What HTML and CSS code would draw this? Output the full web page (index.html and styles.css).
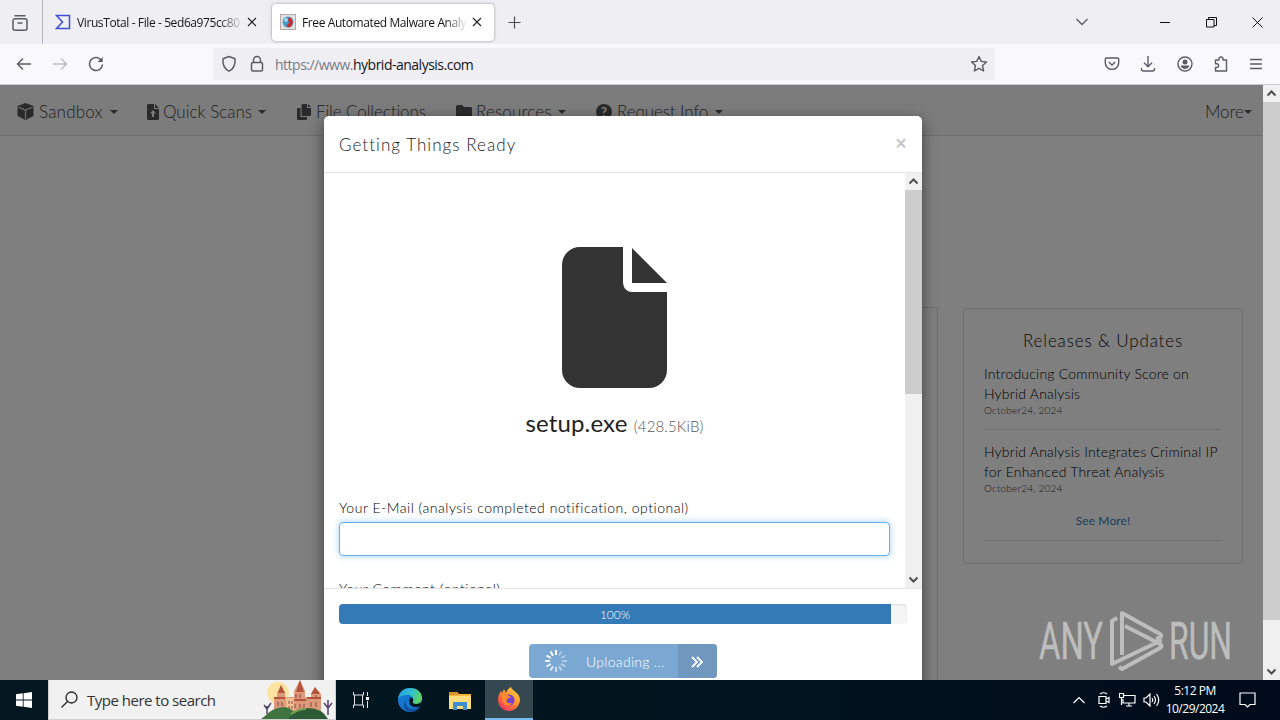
FILE: index.html
```html
<!DOCTYPE html>
<html lang="en">
<head>
  <meta charset="UTF-8">
  <title>Free Automated Malware Analysis Service</title>
  <link rel="stylesheet" href="styles.css">
</head>
<body>

<!-- tab strip -->
<div class="tabs">
  <div class="tabs-view">
    <svg width="18" height="18" viewBox="0 0 18 18" fill="none" stroke="#5b5b66" stroke-width="1.5"><path d="M3.5 1.7h11M4 4.7h10a2 2 0 0 1 2 2v7.5a2 2 0 0 1-2 2H4a2 2 0 0 1-2-2V6.700a2 2 0 0 1 2-2zM6.500 9h5"/></svg>
  </div>
  <div class="tab">
    <svg class="tab-icon" width="16" height="16" viewBox="0 0 16 16" fill="none" stroke="#3b4fd8" stroke-width="1.5"><path d="M1.500 1.500h13v13h-13L7.500 8z"/></svg>
    <span class="tab-title">VirusTotal - File - 5ed6a975cc80</span>
    <svg class="tab-close" width="10" height="10" viewBox="0 0 10 10" stroke="#222" stroke-width="1.100"><path d="M1 1l8 8M9 1L1 9"/></svg>
  </div>
  <div class="tab active">
    <svg class="tab-icon" width="16" height="16" viewBox="0 0 16 16"><rect x=".5" y=".5" width="15" height="15" fill="#dfe3e4" stroke="#b9a9a5"/><circle cx="8" cy="8" r="5.500" fill="#3f9fcc"/><path d="M9 3a5.500 5.500 0 0 1 0 10.400L6 12l3-3-1-3z" fill="#d02c2c"/><circle cx="6" cy="6" r="2" fill="#9ed4ea"/></svg>
    <span class="tab-title">Free Automated Malware Analy</span>
    <svg class="tab-close" width="10" height="10" viewBox="0 0 10 10" stroke="#222" stroke-width="1.100"><path d="M1 1l8 8M9 1L1 9"/></svg>
  </div>
  <svg class="new-tab" width="13" height="13" viewBox="0 0 13 13" stroke="#4c4c55" stroke-width="1.200"><path d="M6.500 0.500v12M.5 6.500h12"/></svg>
  <div class="window-buttons">
    <svg width="12" height="12" viewBox="0 0 12 12" fill="none" stroke="#5b5b66" stroke-width="1.300"><path d="M.5 3L6 8.500 11.500 3"/></svg>
    <svg class="min" width="11" height="11" viewBox="0 0 11 11" stroke="#111"><path d="M0 5.500h10"/></svg>
    <svg width="11" height="11" viewBox="0 0 11 11" fill="none" stroke="#111"><path d="M.5 2.500h7.500v7.500H.5zM2.500 2.500v-2h8v8H8"/></svg>
    <svg width="11" height="11" viewBox="0 0 11 11" stroke="#111"><path d="M.5.5l10 10M10.500.5l-10 10"/></svg>
  </div>
</div>

<!-- toolbar -->
<div class="toolbar">
  <div class="nav-buttons">
    <svg width="16" height="16" viewBox="0 0 16 16" fill="none" stroke="#5b5b66" stroke-width="1.400"><path d="M15 8H1.500M7 2.500L1.500 8 7 13.500"/></svg>
    <svg width="16" height="16" viewBox="0 0 16 16" fill="none" stroke="#bdbdc4" stroke-width="1.400"><path d="M1 8h13.500M9 2.500L14.500 8 9 13.500"/></svg>
    <svg width="16" height="16" viewBox="0 0 16 16" fill="none" stroke="#5b5b66" stroke-width="1.500"><path d="M13.500 4.500A6.500 6.500 0 1 0 14.500 8.500"/><path d="M14.700 1v5H9.500z" fill="#5b5b66" stroke="none"/></svg>
  </div>
  <div class="urlbar">
    <svg width="16" height="18" viewBox="0 0 16 18" fill="none" stroke="#5b5b66" stroke-width="1.500"><path d="M8 1.500l6 2.200c.5 5.500-.8 9.800-6 12.500C2.800 13.500 1.500 9.200 2 3.700z" stroke-linejoin="round"/></svg>
    <svg width="14" height="18" viewBox="0 0 14 18" fill="none" stroke="#5b5b66" stroke-width="1.500"><rect x="1.500" y="7.500" width="11" height="8.500" rx="1.500"/><path d="M3.500 7.500V5a3.500 3.500 0 0 1 7 0v2.500"/></svg>
    <span class="url">https://www.<b>hybrid-analysis.com</b></span>
    <svg class="star" width="18" height="18" viewBox="0 0 18 18" fill="none" stroke="#5b5b66" stroke-width="1.400" stroke-linejoin="round"><path d="M9 1.500l2.200 4.900 5.300.6-4 3.500 1.100 5.500L9 13.300 4.400 16l1.100-5.500-4-3.500 5.300-.6z"/></svg>
  </div>
  <div class="tools">
    <svg width="16" height="16" viewBox="0 0 16 16" fill="none" stroke="#5b5b66" stroke-width="1.400"><path d="M2.500 2h11A1.200 1.200 0 0 1 14.700 3.200v3.500a6.700 6.700 0 0 1-13.400 0V3.200A1.200 1.200 0 0 1 2.500 2zM4.800 6L8 9l3.200-3"/></svg>
    <svg width="16" height="16" viewBox="0 0 16 16" fill="none" stroke="#5b5b66" stroke-width="1.400"><path d="M8 0v10.500M4 6.800l4 4 4-4M1.500 12v1a2 2 0 0 0 2 2h9a2 2 0 0 0 2-2v-1"/></svg>
    <svg width="16" height="16" viewBox="0 0 16 16"><circle cx="8" cy="8" r="7" fill="none" stroke="#5b5b66" stroke-width="1.400"/><circle cx="8" cy="6" r="2.500" fill="#5b5b66"/><path d="M3.500 9.500h9c-.6 2.300-2.500 3.500-4.500 3.500s-3.900-1.200-4.500-3.500z" fill="#5b5b66"/></svg>
    <svg width="16" height="16" viewBox="0 0 16 16" fill="none" stroke="#5b5b66" stroke-width="1.400" stroke-linejoin="round"><path d="M6 4V3a2 2 0 0 1 4 0v1h3.500v11H2.500v-3.500h1.200a1.900 1.900 0 0 0 0-3.800H2.500V4z"/></svg>
    <svg width="14" height="16" viewBox="0 0 14 16" stroke="#5b5b66" stroke-width="1.300"><path d="M1 3.500h12M1 8h12M1 12.500h12"/></svg>
  </div>
</div>

<!-- page content -->
<div class="viewport">
  <div class="page">
    <nav class="navbar">
      <a class="nav-sandbox">
        <svg width="17" height="17" viewBox="0 0 17 17" fill="#555"><path d="M8.500 0l8 3v10l-8 4-8-4V3z"/><path d="M1.500 4.200l7 2.800 7-2.800M8.500 7v9" stroke="#ddd" fill="none" stroke-width="1.200"/></svg>
        <span>Sandbox</span><i class="caret"></i>
      </a>
      <a class="nav-scans">
        <svg width="12" height="16" viewBox="0 0 12 16"><path d="M1.500 0H7v5h5v9.500A1.500 1.500 0 0 1 10.500 16h-9A1.500 1.500 0 0 1 0 14.500v-13A1.500 1.500 0 0 1 1.500 0zM8 0l4 4H8z" fill="#555"/><path d="M6 6l3 3.500H7V13H5V9.500H3z" fill="#f8f8f8"/></svg>
        <span>Quick Scans</span><i class="caret"></i>
      </a>
      <a class="nav-files">
        <svg width="14" height="16" viewBox="0 0 14 16" fill="#555"><path d="M5.500 0H10v4h4v7a1 1 0 0 1-1 1H5.500a1 1 0 0 1-1-1V1a1 1 0 0 1 1-1zM11 0l3 3h-3zM1 4h2.500v9H10v2a1 1 0 0 1-1 1H1a1 1 0 0 1-1-1V5a1 1 0 0 1 1-1z"/></svg>
        <span>File Collections</span>
      </a>
      <a class="nav-resources">
        <svg width="16" height="13" viewBox="0 0 16 13" fill="#555"><path d="M1.500 0H6l2 2h6.500A1.500 1.500 0 0 1 16 3.500v8a1.500 1.500 0 0 1-1.500 1.500h-13A1.500 1.500 0 0 1 0 11.500v-10A1.500 1.500 0 0 1 1.500 0z"/></svg>
        <span>Resources</span><i class="caret"></i>
      </a>
      <a class="nav-request">
        <em class="question">?</em>
        <span>Request Info</span><i class="caret"></i>
      </a>
      <a class="nav-more"><span>More</span><i class="caret"></i></a>
    </nav>
    <div class="columns">
      <div class="main-panel"></div>
      <aside class="updates">
        <h4>Releases &amp; Updates</h4>
        <article>
          <h5>Introducing Community Score on<br>Hybrid Analysis</h5>
          <time>October24, 2024</time>
        </article>
        <article>
          <h5>Hybrid Analysis Integrates Criminal IP<br>for Enhanced Threat Analysis</h5>
          <time>October24, 2024</time>
          <a class="see-more">See More!</a>
        </article>
      </aside>
    </div>
    <div class="backdrop"></div>

    <div class="modal">
      <div class="modal-header">
        <h4>Getting Things Ready</h4>
        <span class="close">×</span>
      </div>
      <div class="modal-body">
        <div class="modal-content">
          <svg class="file-icon" width="106" height="142" viewBox="0 0 106 142" fill="#333"><path d="M18 0h43v36q1 8 8 9h36v78a18 18 0 0 1-18 18H18A18 18 0 0 1 0 123V18A18 18 0 0 1 18 0zM70 1l35 35H70z"/></svg>
          <p class="file-name"><span>setup.exe</span> <small>(428.5KiB)</small></p>
          <label class="email-label">Your E-Mail (analysis completed notification, optional)</label>
          <input class="email" type="text">
          <label class="comment-label">Your Comment (optional)</label>
        </div>
        <div class="scrollbar">
          <svg width="17" height="17" viewBox="0 0 17 17" fill="none" stroke="#505050" stroke-width="2"><path d="M4.500 10.500l4-4 4 4"/></svg>
          <div class="thumb"></div>
          <svg width="17" height="17" viewBox="0 0 17 17" fill="none" stroke="#505050" stroke-width="2"><path d="M4.500 6.500l4 4 4-4"/></svg>
        </div>
      </div>
      <div class="modal-footer">
        <div class="progress"><div class="bar">100%</div></div>
        <div class="upload">
          <svg width="24" height="24" viewBox="-12 -12 24 24" stroke="#fff" stroke-width="2">
            <path d="M0-6v-5"/>
            <path d="M0-6v-5" transform="rotate(30)" opacity=".35"/>
            <path d="M0-6v-5" transform="rotate(60)" opacity=".4"/>
            <path d="M0-6v-5" transform="rotate(90)" opacity=".4"/>
            <path d="M0-6v-5" transform="rotate(120)" opacity=".5"/>
            <path d="M0-6v-5" transform="rotate(150)" opacity=".5"/>
            <path d="M0-6v-5" transform="rotate(180)" opacity=".6"/>
            <path d="M0-6v-5" transform="rotate(210)" opacity=".75"/>
            <path d="M0-6v-5" transform="rotate(240)" opacity=".85"/>
            <path d="M0-6v-5" transform="rotate(270)" opacity=".9"/>
            <path d="M0-6v-5" transform="rotate(300)"/>
            <path d="M0-6v-5" transform="rotate(330)"/>
          </svg>
          <span class="upload-text">Uploading ...</span>
          <span class="upload-next"><svg width="12" height="12" viewBox="0 0 12 12" fill="none" stroke="#fff" stroke-width="1.800"><path d="M1 1l5 5-5 5M6 1l5 5-5 5"/></svg></span>
        </div>
      </div>
    </div>

    <svg class="watermark" width="200" height="64" viewBox="0 0 200 64">
      <g class="watermark-text" font-size="52">
        <text x="1" y="50" textLength="64" lengthAdjust="spacingAndGlyphs">ANY</text>
        <text x="131" y="50" textLength="63" lengthAdjust="spacingAndGlyphs">RUN</text>
      </g>
      <g fill="none" stroke="#bdbdbd" stroke-width="4" stroke-linejoin="round">
        <path d="M84 46V4l38 21q3 2-1 4l-3 1"/>
        <path d="M79 9l-5 3v43l48-23-3-2"/>
        <path d="M87 17l35 18q3 2 0 4L84 60l-3-2"/>
      </g>
    </svg>
  </div>
  <div class="scrollbar">
    <svg width="17" height="17" viewBox="0 0 17 17" fill="none" stroke="#505050" stroke-width="2"><path d="M4.500 10.500l4-4 4 4"/></svg>
    <div class="thumb"></div>
    <svg width="17" height="17" viewBox="0 0 17 17" fill="none" stroke="#505050" stroke-width="2"><path d="M4.500 6.500l4 4 4-4"/></svg>
  </div>
</div>

<!-- windows taskbar -->
<div class="taskbar">
  <div class="start">
    <svg width="16" height="16" viewBox="0 0 16 16" fill="#fff"><path d="M0 2.200l6.800-.9v6.300H0zM7.600 1.200L16 0v7.600H7.600zM0 8.400h6.800v6.300L0 13.800zM7.600 8.400H16V16l-8.400-1.200z"/></svg>
  </div>
  <div class="search">
    <svg width="17" height="17" viewBox="0 0 17 17" fill="none" stroke="#222" stroke-width="1.300"><circle cx="10.500" cy="6.500" r="5.500"/><path d="M6.500 10.500L.5 16.500"/></svg>
    <span>Type here to search</span>
    <svg class="castle" width="74" height="39" viewBox="0 0 74 39">
      <circle cx="17" cy="13" r="11" fill="#fbe3a0"/>
      <path d="M13 31V17h3V13l4-8 4 8v4h9V11l6-11 5 11v6h6v-3l4-7 6 7v15l-1 5z" fill="#dc9a78"/>
      <path d="M17 13l3-8 4 8zM35 12l4-12 4 12zM50 14l4-7 5 7zM13 19h11v-2H13zM31 21h14v-2H31zM46 19h14v-2H46z" fill="#b4533f"/>
      <path d="M17 22v4M21 22v4M28 20v4M35 14v4M39 14v4M34 24v4M39 24v4M43 24v4M50 22v5M55 22v5M55 15v3" stroke="#8a4a48"/>
      <path d="M25 18h8v12h-8z" fill="#efc08f"/>
      <path d="M28 21v3M31 21v3M28 26v3M31 26v3" stroke="#8a4a48"/>
      <path d="M4 36q7-8 18-9 8 0 15 9l5 3H0z" fill="#3f7440"/>
      <path d="M27 39q8-10 20-11 14 0 20 11z" fill="#2c5b36"/>
      <path d="M30 34q7-5 15-5" stroke="#77a44f" stroke-width="2" fill="none"/>
      <path d="M6 34v-8M3 25l3 4 4-6M67 35v-11M63 23l4 5 4-5M67 24v-4" stroke="#514269" stroke-width="1.500" fill="none"/>
    </svg>
  </div>
  <div class="apps">
    <div class="app">
      <svg width="18" height="18" viewBox="0 0 18 18" fill="none" stroke="#e4e8ea"><path d="M1.500 1v3h10V1M1.500 17v-3h10v3M2.500 4v10M10.500 4v10M15.500 1v4M15.500 10v7"/><path d="M14 6h3v3h-3z" fill="#fff" stroke="none"/></svg>
    </div>
    <div class="app">
      <svg width="24" height="24" viewBox="0 0 24 24">
        <defs>
          <linearGradient id="edgeTop" x1="0" y1="0" x2="1" y2=".3"><stop offset="0" stop-color="#2299dc"/><stop offset=".6" stop-color="#31c1ce"/><stop offset="1" stop-color="#5cd36a"/></linearGradient>
        </defs>
        <circle cx="12" cy="12" r="12" fill="#1477cf"/>
        <path d="M0 11C1 3 7 0 12 0c8 0 12 5 12 10 0 4-3 6-6 6-3 0-4-1-3-3 1-4-2-6-5-6C5 7 1 9 0 11z" fill="url(#edgeTop)"/>
        <path d="M8 11c-2 6 2 10 7 10 3 0 5-1 7-2-3 4-7 5-10 5-6 0-8-7-4-13z" fill="#10529b"/>
        <path d="M12 10c2-1 4 1 3 3s0 3 3 3c3 0 5-1 6-3 0 3-1 5-3 6-5 1-12-1-9-9z" fill="#02141c"/>
      </svg>
    </div>
    <div class="app">
      <svg width="22" height="19" viewBox="0 0 22 19"><path d="M0 1h8l2 2h12v15H0z" fill="#f5b73b"/><path d="M0 1h8l2 2-2 1H0z" fill="#d9932b"/><path d="M0 5h22v13H0z" fill="#fddc7c"/><path d="M4 19v-8h14v8h-4v-4H8v4z" fill="#3e8fd0"/></svg>
    </div>
    <div class="app current">
      <svg width="24" height="24" viewBox="0 0 24 24">
        <defs><linearGradient id="fox" x1="1" y1="0" x2=".2" y2="1"><stop offset="0" stop-color="#ffe14a"/><stop offset=".45" stop-color="#ff9a2c"/><stop offset="1" stop-color="#ee2c63"/></linearGradient></defs>
        <path d="M4 4l1 2 2-4 2 4c1-3 3-5 5-6 1 4 8 5 9 12 0 7-5 12-11 12S1 19 1 13c0-4 1-6 3-9z" fill="url(#fox)"/>
        <circle cx="12" cy="13" r="5.500" fill="#7542d6"/>
        <path d="M5 8q4-2 7 1l2 1-4 2q-2 5 5 4-4 5-8 1-3-4-2-9z" fill="#ff8a2b"/>
      </svg>
    </div>
  </div>
  <div class="tray">
    <svg width="12" height="8" viewBox="0 0 12 8" fill="none" stroke="#fff" stroke-width="1.200"><path d="M.5 7L6 1.500 11.500 7"/></svg>
    <svg class="meet" width="12" height="16" viewBox="0 0 12 16" fill="none" stroke="#fff" stroke-width="1.200"><path d="M1 4.500h7v7H1zM8 7l3-1.500v5L8 9M2 2q3.500-2.500 7 0M2 14q3.500 2.500 7 0"/></svg>
    <svg class="net" width="17" height="14" viewBox="0 0 17 14" fill="none" stroke="#fff" stroke-width="1.200"><path d="M5 2.500h11v7.500H4V6M7 13h6M10 10v3M.5.5h4v4h-4zM2.500 4.500V12"/></svg>
    <svg class="sound" width="18" height="14" viewBox="0 0 18 14" fill="none" stroke="#fff" stroke-width="1.200"><path d="M1 5h2l4-4v12L3 9H1zM9 5q1.500 2 0 4M11 3q3 4 0 8M13.500 1q4.500 6 0 12"/></svg>
    <div class="clock"><span>5:12 PM</span><span>10/29/2024</span></div>
    <svg width="17" height="16" viewBox="0 0 17 16" fill="none" stroke="#fff" stroke-width="1.200"><path d="M1 1h15v11.500h-5L8.500 15 6 12.500H1z"/></svg>
  </div>
</div>

</body>
</html>
```
FILE: styles.css
```css
* {
  box-sizing: border-box;
}
body {
  margin: 0;
  width: 1280px;
  height: 720px;
  overflow: hidden;
  display: flex;
  flex-direction: column;
  font-family: "Open Sans", sans-serif;
}
svg {
  display: block;
  flex: none;
}
h4, h5, p {
  margin: 0;
  font-weight: 300;
}

/* tabs */
.tabs {
  height: 44px;
  flex: none;
  display: flex;
  align-items: center;
  background: #efeef3;
}
.tabs-view {
  width: 43px;
  height: 44px;
  padding: 14px 0 0 11px;
  border-right: 1px solid #b5b5bc;
}
.tab {
  width: 222px;
  height: 37px;
  margin-left: 3px;
  padding-left: 9px;
  display: flex;
  align-items: center;
  border-radius: 4px;
}
.tab.active {
  margin-left: 4px;
  padding-left: 8px;
  background: #fff;
  box-shadow: 0 0 3px rgba(0, 0, 0, 0.4);
}
.tab-title {
  width: 166px;
  margin: 0 4px 0 6px;
  white-space: nowrap;
  font-size: 12px;
  letter-spacing: -0.4px;
  color: #15141a;
  -webkit-mask-image: linear-gradient(to right, #000 86%, transparent);
  mask-image: linear-gradient(to right, #000 86%, transparent);
}
.new-tab {
  margin-left: 14px;
}
.window-buttons {
  margin-left: auto;
  padding-right: 17px;
  display: flex;
  align-items: center;
  gap: 35px;
}
.window-buttons .min {
  margin-left: 37px;
}

/* toolbar */
.toolbar {
  height: 41px;
  flex: none;
  display: flex;
  align-items: center;
  background: #f9f9fb;
  border-bottom: 1px solid #ccc;
}
.nav-buttons {
  width: 213px;
  padding-left: 16px;
  display: flex;
  gap: 20px;
}
.urlbar {
  width: 782px;
  height: 32px;
  padding: 0 7px 0 8px;
  display: flex;
  align-items: center;
  background: #efeef3;
  border-radius: 2px;
}
.urlbar svg + svg {
  margin-left: 13px;
}
.url {
  margin-left: 11px;
  padding-top: 1px;
  font-size: 14px;
  letter-spacing: -0.5px;
  color: #7a7a82;
}
.url b {
  font-weight: 400;
  color: #15141a;
}
.urlbar .star {
  margin-left: auto;
}
.tools {
  flex: 1;
  padding: 0 17px 0 109px;
  display: flex;
  justify-content: space-between;
}

/* page */
.viewport {
  height: 595px;
  flex: none;
  display: flex;
}
.page {
  position: relative;
  width: 1263px;
  overflow: hidden;
  background: #fff;
  font-family: Lato, sans-serif;
  font-weight: 300;
}
.navbar {
  height: 51px;
  display: flex;
  align-items: center;
  padding: 3px 11px 0 17px;
  background: #f8f8f8;
  border-bottom: 1px solid #ddd;
  font-size: 17px;
  color: #444;
}
.navbar a {
  display: flex;
  align-items: center;
  white-space: nowrap;
}
.nav-sandbox { width: 130px; gap: 5px; letter-spacing: 0.2px; }
.nav-scans { width: 150px; gap: 4px; }
.nav-files { width: 159px; gap: 5px; letter-spacing: -0.1px; }
.nav-resources { width: 140px; gap: 4px; letter-spacing: 0.15px; }
.nav-request { gap: 5px; letter-spacing: -0.1px; }
.nav-more { margin-left: auto; }
.caret {
  margin-left: 2px;
  border: 4px solid transparent;
  border-top-color: #555;
  border-bottom: 0;
}
.nav-more .caret {
  margin-left: 0;
}
.question {
  width: 16px;
  height: 16px;
  border-radius: 50%;
  background: #555;
  color: #f8f8f8;
  font: 900 13px/16px Lato, sans-serif;
  text-align: center;
}
.columns {
  display: flex;
  padding: 171px 20px 0 340px;
}
.main-panel {
  width: 598px;
  height: 420px;
  border: 1px solid #ddd;
}
.updates {
  width: 280px;
  height: 256px;
  margin: 1px 0 0 25px;
  padding: 20px;
  border: 1px solid #ddd;
  border-radius: 3px;
}
.updates h4 {
  text-align: center;
  font-size: 17px;
  line-height: 23px;
  letter-spacing: 0.85px;
  color: #111;
}
.updates article {
  padding-top: 12px;
  height: 78px;
  border-bottom: 1px solid #e3e3e3;
}
.updates article + article {
  height: 111px;
}
.updates h5 {
  font-size: 14px;
  line-height: 19.500px;
  letter-spacing: 0.22px;
  white-space: nowrap;
  color: #000;
}
.updates time {
  display: block;
  font-size: 10px;
  line-height: 14px;
  letter-spacing: 0.2px;
  color: #333;
}
.see-more {
  display: block;
  margin-top: 18px;
  text-align: center;
  font-size: 12px;
  font-weight: 400;
  line-height: 16px;
  letter-spacing: 0.1px;
  color: #337ab7;
}
.backdrop {
  position: absolute;
  inset: 0;
  background: rgba(0, 0, 0, 0.5);
}

/* modal */
.modal {
  position: absolute;
  left: 324px;
  top: 31px;
  width: 598px;
  height: 600px;
  background: #fff;
  border-radius: 5px;
  box-shadow: 0 5px 15px rgba(0, 0, 0, 0.5);
  color: #222;
}
.modal-header {
  height: 57px;
  padding: 1px 15px 0;
  display: flex;
  align-items: center;
  justify-content: space-between;
  border-bottom: 1px solid #e5e5e5;
}
.modal-header h4 {
  font-size: 17px;
  letter-spacing: 1.05px;
}
.close {
  margin-top: -4px;
  font: 600 21px/20px "Open Sans", sans-serif;
  color: #c4c4c4;
}
.modal-body {
  height: 416px;
  display: flex;
  overflow: hidden;
  border-bottom: 1px solid #e5e5e5;
}
.modal-content {
  width: 581px;
  padding: 74px 15px 0;
  display: flex;
  flex-direction: column;
}
.file-icon {
  margin-left: 223px;
}
.file-name {
  margin: 18px 0 0;
  text-align: center;
  font-size: 24px;
  line-height: 32px;
  font-weight: 400;
  letter-spacing: 0.15px;
  white-space: nowrap;
}
.file-name small {
  font-size: 15px;
  font-weight: 300;
  color: #555;
}
.email-label,
.comment-label {
  font-size: 14px;
  line-height: 20px;
  letter-spacing: 0.52px;
  color: #000;
}
.email-label {
  margin-top: 56px;
}
.email {
  width: 551px;
  height: 34px;
  margin-top: 4px;
  flex: none;
  background: #fff;
  border: 1px solid #66afe9;
  border-radius: 4px;
  box-shadow: 0 0 7px rgba(102, 175, 233, 0.6);
}
.comment-label {
  margin-top: 23px;
}
.scrollbar {
  width: 17px;
  flex: none;
  display: flex;
  flex-direction: column;
  background: #f0f0f0;
}
.scrollbar .thumb {
  height: 518px;
  margin-bottom: auto;
  background: #cdcdcd;
}
.modal .thumb {
  height: 204px;
}
.modal-footer {
  padding: 15px;
  display: flex;
  flex-direction: column;
  align-items: center;
}
.progress {
  width: 568px;
  height: 20px;
  background: #f5f5f5;
  border-radius: 4px;
  box-shadow: inset 0 1px 2px rgba(0, 0, 0, 0.1);
}
.bar {
  width: 552px;
  height: 20px;
  background: #337ab7;
  border-radius: 4px 0 0 4px;
  color: #fff;
  font-size: 12px;
  line-height: 21px;
  text-align: center;
}
.upload {
  width: 188px;
  height: 34px;
  margin-top: 20px;
  padding-left: 15px;
  display: flex;
  align-items: center;
  overflow: hidden;
  background: #7ba8d2;
  border-radius: 4px;
  color: #fff;
}
.upload-text {
  width: 110px;
  padding: 1px 0 0 18px;
  font-size: 14px;
  letter-spacing: 0.3px;
  white-space: nowrap;
}
.upload-next {
  width: 39px;
  height: 34px;
  padding: 12px 0 0 13px;
  background: #7097be;
}
.watermark {
  position: absolute;
  left: 1038px;
  top: 524px;
}
.watermark-text {
  fill: #bdbdbd;
  stroke: #bdbdbd;
  stroke-width: 0.5px;
  font-family: Roboto, sans-serif;
  font-weight: 400;
}

/* taskbar */
.taskbar {
  height: 40px;
  flex: none;
  display: flex;
  background: linear-gradient(to right, #02171f, #01141f 60%, #010a1a);
  color: #fff;
}
.start {
  width: 48px;
  display: flex;
  align-items: center;
  justify-content: center;
}
.search {
  width: 288px;
  padding-left: 12px;
  display: flex;
  align-items: center;
  background: #f1f1f1;
  border: 1px solid #d0d0d0;
  border-top: 0;
  color: #333;
  font-size: 15px;
}
.search span {
  margin-left: 9px;
  letter-spacing: -0.5px;
}
.castle {
  margin-left: auto;
}
.apps {
  display: flex;
}
.app {
  width: 50px;
  display: flex;
  align-items: center;
  justify-content: center;
}
.app:first-child {
  width: 49px;
}
.current {
  width: 48px;
  background: #354850;
  border-bottom: 2px solid #76b9ed;
}
.tray {
  margin-left: auto;
  padding-right: 24px;
  display: flex;
  align-items: center;
}
.meet { margin-left: 13px; }
.net { margin-left: 9px; }
.sound { margin-left: 7px; }
.clock {
  width: 60px;
  margin: 0 14px 0 4px;
  display: flex;
  flex-direction: column;
  align-items: center;
  font-size: 12px;
  line-height: 18px;
  letter-spacing: -0.5px;
  white-space: nowrap;
}
```
